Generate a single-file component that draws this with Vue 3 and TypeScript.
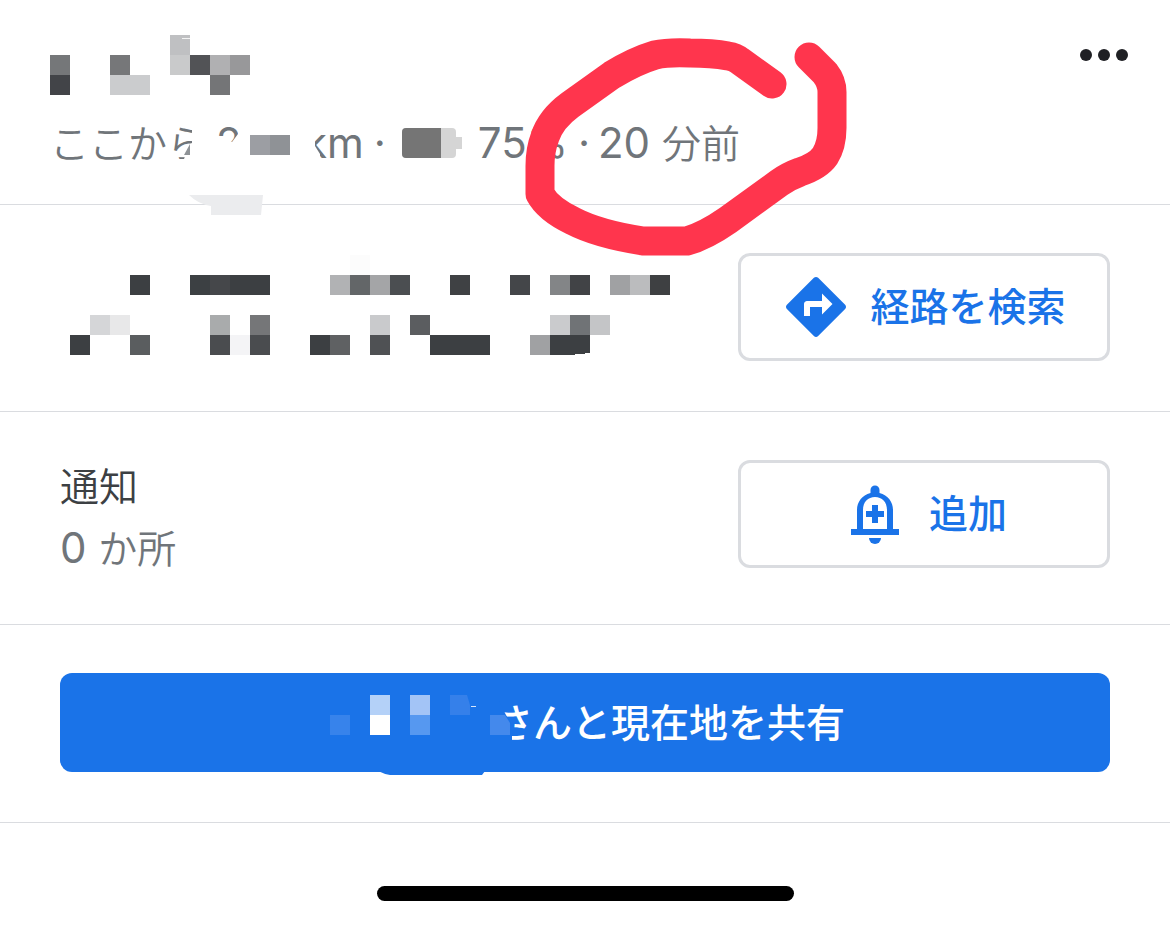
<script setup lang="ts">
interface Cell {
  c: number
  r: number
  fill: string
  w?: number
}

const CELL = 20

const nameCells: Cell[] = [
  { c: 6, r: 0, fill: '#bfc0c2' },
  { c: 0, r: 1, fill: '#757779' },
  { c: 3, r: 1, fill: '#767779' },
  { c: 6, r: 1, fill: '#c9cacb' },
  { c: 7, r: 1, fill: '#525356' },
  { c: 8, r: 1, fill: '#b0b0b2' },
  { c: 9, r: 1, fill: '#98989a' },
  { c: 0, r: 2, fill: '#424448' },
  { c: 3, r: 2, fill: '#cbccce', w: 2 },
  { c: 8, r: 2, fill: '#747577' },
]

const placeCells: Cell[] = [
  { c: 14, r: -1, fill: '#fcfcfc' },
  { c: 3, r: 0, fill: '#3c3f42' },
  { c: 6, r: 0, fill: '#3c4043' },
  { c: 7, r: 0, fill: '#45474a' },
  { c: 8, r: 0, fill: '#3c3f42', w: 2 },
  { c: 13, r: 0, fill: '#b1b2b4' },
  { c: 14, r: 0, fill: '#636668' },
  { c: 15, r: 0, fill: '#a4a5a7' },
  { c: 16, r: 0, fill: '#4b4e51' },
  { c: 19, r: 0, fill: '#3f4144' },
  { c: 22, r: 0, fill: '#444649' },
  { c: 24, r: 0, fill: '#838587' },
  { c: 25, r: 0, fill: '#414346' },
  { c: 27, r: 0, fill: '#a0a1a3' },
  { c: 28, r: 0, fill: '#bbbcbe' },
  { c: 29, r: 0, fill: '#3e4042' },
  { c: 1, r: 2, fill: '#d5d6d8' },
  { c: 2, r: 2, fill: '#e8e8e9' },
  { c: 7, r: 2, fill: '#a9abac' },
  { c: 9, r: 2, fill: '#757678' },
  { c: 15, r: 2, fill: '#c9cacc' },
  { c: 17, r: 2, fill: '#5b5d60' },
  { c: 24, r: 2, fill: '#cacbcd' },
  { c: 25, r: 2, fill: '#707376' },
  { c: 26, r: 2, fill: '#c4c5c7' },
  { c: 0, r: 3, fill: '#3c3f42' },
  { c: 3, r: 3, fill: '#5a5d5f' },
  { c: 7, r: 3, fill: '#4a4c4f' },
  { c: 8, r: 3, fill: '#f4f4f6' },
  { c: 9, r: 3, fill: '#4a4c4f' },
  { c: 12, r: 3, fill: '#3c3f42' },
  { c: 13, r: 3, fill: '#5f6163' },
  { c: 15, r: 3, fill: '#4f5154' },
  { c: 18, r: 3, fill: '#3c3f42', w: 3 },
  { c: 23, r: 3, fill: '#a0a1a3' },
  { c: 24, r: 3, fill: '#3c3f42', w: 2 },
]

const shareCells: Cell[] = [
  { c: 0, r: 1, fill: '#3783eb' },
  { c: 2, r: 0, fill: '#b4d1f8' },
  { c: 2, r: 1, fill: '#ffffff' },
  { c: 4, r: 0, fill: '#a3c4f6' },
  { c: 4, r: 1, fill: '#5698f0' },
]
</script>

<template>
  <main class="sheet">
    <header class="row head">
      <div class="title-line">
        <svg class="name" width="200" height="60" viewBox="0 0 200 60" aria-hidden="true" shape-rendering="crispEdges">
          <rect v-for="(p, i) in nameCells" :key="i" :x="p.c * CELL" :y="p.r * CELL" :width="(p.w ?? 1) * CELL" :height="CELL" :fill="p.fill" />
          <rect x="132" y="3" width="8" height="1" fill="#f4f4f4" />
        </svg>
        <button class="more" type="button" aria-label="その他">
          <svg width="48" height="12" viewBox="0 0 48 12" fill="#1f2024">
            <circle cx="6" cy="6" r="6" />
            <circle cx="24" cy="6" r="6" />
            <circle cx="42" cy="6" r="6" />
          </svg>
        </button>
      </div>
      <div class="status">
        <span class="jp">ここから</span>
        <span class="distance">2</span>
        <span>km</span>
        <span class="dot">·</span>
        <svg class="battery" width="60" height="30" viewBox="0 0 60 30" aria-hidden="true">
          <path d="M4 0H50Q54 0 54 4V9H60V21H54V26Q54 30 50 30H4Q0 30 0 26V4Q0 0 4 0Z" fill="#d5d5d5" />
          <path d="M4 0H39V30H4Q0 30 0 26V4Q0 0 4 0Z" fill="#757575" />
        </svg>
        <span>75%</span>
        <span class="dot">·</span>
        <span>20 <span class="jp">分前</span></span>
      </div>
      <svg class="overlay" width="860" height="270" viewBox="0 0 860 270" aria-hidden="true">
        <path d="M192 112H214V170H150V159H184L190 144L192 143Z" fill="#fff" />
        <path d="M190 144V155H184Z" fill="#8f9397" />
        <path d="M214 137H221L232 142L238 134V112H246V170H214Z" fill="#fff" />
        <path d="M296 112H315V146L320 154V170H296Z" fill="#fff" />
        <rect x="250" y="135" width="20" height="20" fill="#9c9ea3" />
        <rect x="270" y="135" width="20" height="20" fill="#8f9296" />
        <path d="M189 195H263L261 215H211V206Q198 204 189 195Z" fill="#ebecee" />
        <path
          d="M772 84L740 61Q735 57 728 56Q712 53 690 53Q668 52 655 55Q635 61 612 75L570 105Q551 119 545 137Q540 150 540 166V194Q548 209 573 221Q598 234 643 241H687Q705 236 728 220L779 183Q789 176 800 172Q818 166 825 156Q832 145 832 128V92Q832 82 825 73L809 57"
          fill="none"
          stroke="#ff354d"
          stroke-width="29"
          stroke-linecap="round"
          stroke-linejoin="round"
        />
      </svg>
    </header>

    <section class="row place">
      <svg class="address" width="620" height="108" viewBox="-10 -22 620 108" aria-hidden="true" shape-rendering="crispEdges">
        <rect v-for="(p, i) in placeCells" :key="i" :x="p.c * CELL" :y="p.r * CELL" :width="(p.w ?? 1) * CELL" :height="CELL" :fill="p.fill" />
        <path d="M500 80L520 78V80Z" fill="#fff" />
      </svg>
      <button class="outlined" type="button">
        <svg width="72" height="72" viewBox="0 0 24 24" fill="#1a73e8" aria-hidden="true">
          <path d="M21.71 11.29l-9-9c-.39-.39-1.02-.39-1.41 0l-9 9c-.39.39-.39 1.02 0 1.41l9 9c.39.39 1.02.39 1.41 0l9-9c.39-.38.39-1.01 0-1.41zM14 14.5V12h-4v3H8v-4c0-.55.45-1 1-1h5V7.5l3.500 3.500-3.500 3.500z" />
        </svg>
        <span>経路を検索</span>
      </button>
    </section>

    <section class="row notify">
      <div class="notify-text">
        <h2>通知</h2>
        <p><span class="num">0 </span>か所</p>
      </div>
      <button class="outlined" type="button">
        <svg width="72" height="72" viewBox="-12 -7 72 72" fill="#1a73e8" aria-hidden="true">
          <path fill-rule="evenodd" d="M19.500 8V5a4.500 4.500 0 0 1 9 0V8C37 10 42 17 42 25V44H48V50H0V44H6V25C6 17 11 10 19.500 8ZM12 44H36V25C36 17 31 12 24 12S12 17 12 25Z" />
          <path d="M18 53H30A6 6 0 0 1 18 53Z" />
          <path d="M21 20H27V26H33V32H27V38H21V32H15V26H21Z" />
        </svg>
        <span>追加</span>
      </button>
    </section>

    <section class="row share">
      <button class="filled" type="button">
        <svg class="who" width="169" height="60" viewBox="-5 -2 169 60" aria-hidden="true">
          <rect v-for="(p, i) in shareCells" :key="i" :x="p.c * CELL" :y="p.r * CELL" :width="(p.w ?? 1) * CELL" :height="CELL" :fill="p.fill" />
          <path d="M120 0H137L140 10V20H120Z" fill="#3580ea" />
          <rect x="141" y="11" width="5" height="1" fill="#d5e6fc" />
          <path d="M160 50V6H169L176 20L182 30V50Z" fill="#1a73e8" />
          <path d="M160 20H175L180 28V40H160Z" fill="#4489ec" />
          <path d="M48 76H155L152 80H60Q54 79 48 76Z" fill="#1a73e8" />
        </svg>
        <span>さんと現在地を共有</span>
      </button>
    </section>

    <footer class="foot"><div class="home-bar"></div></footer>
  </main>
</template>

<style>
body {
  margin: 0;
  background: #fff;
}
</style>

<style scoped>
.sheet {
  font-family: Inter, "Noto Sans CJK JP", sans-serif;
  font-size: 39px;
  line-height: 60px;
  color: #3c4043;
  background: #fff;
  overflow: hidden;
}
.row {
  border-bottom: 1px solid #dadce0;
}
button {
  font: inherit;
  cursor: pointer;
}
svg {
  display: block;
  flex: none;
}
.head {
  position: relative;
  padding: 35px 42px 31px 50px;
}
.title-line {
  display: flex;
  justify-content: space-between;
  align-items: flex-start;
  margin-bottom: 18px;
}
.more {
  padding: 14px 0;
  border: 0;
  background: none;
}
.status {
  display: flex;
  align-items: baseline;
  height: 60px;
  color: #70757a;
  font-size: 42px;
  white-space: nowrap;
}
.jp {
  font-family: "Noto Sans CJK JP", sans-serif;
  font-size: 39px;
  font-weight: 350;
  line-height: 40px;
}
.distance {
  width: 88px;
  margin-left: 10px;
}
.dot {
  width: 10px;
  margin: 0 10px;
  text-align: center;
}
.battery {
  align-self: center;
  margin: 0 16px 0 8px;
}
.overlay {
  position: absolute;
  top: 0;
  left: 0;
  z-index: 1;
  pointer-events: none;
}
.place,
.notify {
  display: flex;
  align-items: flex-start;
  justify-content: space-between;
  padding: 48px 60px 50px;
}
.address {
  flex: 0 1 620px;
  min-width: 0;
}
.notify {
  padding-bottom: 48px;
}
.outlined {
  display: flex;
  flex: none;
  align-items: center;
  justify-content: center;
  gap: 18px;
  width: 372px;
  height: 108px;
  padding: 0 2px 0 0;
  border: 3px solid #dadce0;
  border-radius: 12px;
  background: #fff;
  color: #1a73e8;
  font-weight: 500;
}
.notify-text {
  font-family: "Noto Sans CJK JP", sans-serif;
}
.notify-text h2 {
  margin: 0;
  font-size: 39px;
  font-weight: 350;
  line-height: 48px;
}
.notify-text p {
  margin: 8px 0 0;
  font-weight: 350;
  line-height: 60px;
  color: #70757a;
}
.num {
  font-family: Inter, sans-serif;
  font-size: 42px;
  font-weight: 400;
  line-height: 40px;
}
.share {
  padding: 48px 60px 50px;
}
.filled {
  display: flex;
  align-items: center;
  justify-content: center;
  width: 100%;
  height: 99px;
  padding: 0;
  border: 0;
  border-radius: 12px;
  background: #1a73e8;
  color: #fff;
  font-weight: 500;
}
.who {
  position: relative;
  z-index: 1;
  overflow: visible;
}
.foot {
  padding: 63px 0 24px;
}
.home-bar {
  width: 417px;
  height: 15px;
  margin: 0 auto;
  border-radius: 8px;
  background: #000;
}
</style>
